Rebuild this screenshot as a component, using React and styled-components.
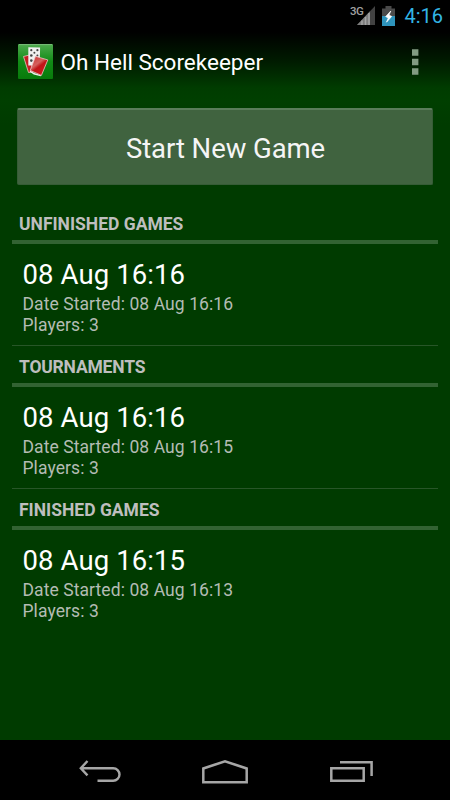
import React from "react";
import styled, { createGlobalStyle } from "styled-components";

const sections = [
  { title: "UNFINISHED GAMES", name: "08 Aug 16:16", started: "08 Aug 16:16", players: 3 },
  { title: "TOURNAMENTS", name: "08 Aug 16:16", started: "08 Aug 16:15", players: 3, tight: true },
  { title: "FINISHED GAMES", name: "08 Aug 16:15", started: "08 Aug 16:13", players: 3 },
];

const SignalIcon = () => (
  <svg width="18" height="19" viewBox="0 0 18 19">
    <path d="M0 19 L18 0 V19 Z" fill="#424242" />
    <path d="M0 19 L13 5.3 V19 Z" fill="#7c7c7c" />
    <path d="M5 14.5v4.5M8.5 11v8M12 7v12" stroke="#a4a4a4" strokeWidth="1.5" />
  </svg>
);

const BatteryIcon = () => (
  <svg width="13" height="20" viewBox="0 0 13 20">
    <path d="M0 2.5h3.5V0h6v2.5H13V20H0z" fill="#4a4a4a" />
    <path d="M0 10h13v10H0z" fill="#2e93bb" />
    <path d="M8.8 5 3.7 10.6l2.6 1.3-1.8 4.3 5.2-5.8-2.7-1.3z" fill="#fff" stroke="#fff" strokeWidth=".7" />
  </svg>
);

const AppIcon = () => (
  <svg width="36" height="36" viewBox="0 0 36 36">
    <defs>
      <linearGradient id="felt" x1="0" y1="0" x2="0" y2="1">
        <stop offset="0" stopColor="#4eaa4e" />
        <stop offset="0.5" stopColor="#118c16" />
        <stop offset="1" stopColor="#087a0b" />
      </linearGradient>
      <linearGradient id="cardBack" x1="0" y1="0" x2="0.7" y2="1">
        <stop offset="0" stopColor="#c8302f" />
        <stop offset="0.45" stopColor="#d4605d" />
        <stop offset="0.6" stopColor="#c01417" />
        <stop offset="1" stopColor="#cc1c1e" />
      </linearGradient>
    </defs>
    <rect x="0" y="0" width="35" height="35" rx="1" fill="url(#felt)" />
    <path d="M1 .6h33" stroke="#79bc79" />
    <path d="M5.5 12.5l6-1.5 4 17-5 .5z" fill="#c31d20" stroke="#e9c4c4" strokeWidth=".8" />
    <path d="M10.3 3.2l11.8.2-.4 18-11.4.2z" fill="#f0f0f0" />
    <g fill="#444">
      <circle cx="13.3" cy="6.2" r="1.1" />
      <circle cx="19.4" cy="6.2" r="1.1" />
      <circle cx="16.4" cy="8.8" r="1" />
      <circle cx="13.3" cy="11.5" r="1.3" />
      <circle cx="19.4" cy="11.5" r="1" />
      <circle cx="13.3" cy="16.6" r="1.3" />
    </g>
    <path d="M12 27l4 2.8 7 1.8" fill="none" stroke="#eee" strokeWidth="1.4" />
    <path d="M17.5 12.3l12.3 3.6-6.4 15.5-11.2-5z" fill="url(#cardBack)" stroke="#efc4c4" strokeWidth=".8" />
  </svg>
);

const OverflowIcon = () => (
  <svg width="7" height="26" viewBox="0 0 7 26">
    <path d="M0 .3h6.4v6.4H0zM0 9.8h6.4v6.4H0zM0 19.3h6.4v6.4H0z" fill="#829b82" />
  </svg>
);

const BackIcon = () => (
  <svg width="42" height="23" viewBox="0 0 42 23">
    <path
      d="M2.5 8.2H34.2a6.3 6.3 0 0 1 0 12.6H18.5M8.5 1 1.8 8.2 8.5 15.4"
      fill="none"
      stroke="#a6a6a6"
      strokeWidth="2.4"
    />
  </svg>
);

const HomeIcon = () => (
  <svg width="48" height="26" viewBox="0 0 48 26">
    <path d="M1.3 23.3V9.5L23 2.2 44.7 9.5v13.8z" fill="none" stroke="#a6a6a6" strokeWidth="2.5" />
  </svg>
);

const RecentsIcon = () => (
  <svg width="43" height="23" viewBox="0 0 43 23">
    <path d="M1.3 8.2h32.4v12.6H1.3z" fill="none" stroke="#a6a6a6" strokeWidth="2.5" />
    <path d="M10 2.2H41.6V16" fill="none" stroke="#a6a6a6" strokeWidth="2.5" />
  </svg>
);

const App = () => {
  return (
    <>
      <GlobalStyle />
      <Screen>
        <StatusBar>
          <Network>3G</Network>
          <SignalIcon />
          <BatteryIcon />
          <Clock>4:16</Clock>
        </StatusBar>
        <ActionBar>
          <AppIcon />
          <Title>Oh Hell Scorekeeper</Title>
          <MenuButton aria-label="More options">
            <OverflowIcon />
          </MenuButton>
        </ActionBar>
        <Content>
          <StartButton type="button">Start New Game</StartButton>
          {sections.map((section) => (
            <Section key={section.title}>
              <SectionTitle $tight={section.tight}>{section.title}</SectionTitle>
              <Game>
                <GameName>{section.name}</GameName>
                <GameInfo>Date Started: {section.started}</GameInfo>
                <GameInfo>Players: {section.players}</GameInfo>
              </Game>
            </Section>
          ))}
        </Content>
        <NavBar>
          <BackIcon />
          <HomeIcon />
          <RecentsIcon />
        </NavBar>
      </Screen>
    </>
  );
};

const GlobalStyle = createGlobalStyle`
  * {
    box-sizing: border-box;
  }
  body {
    margin: 0;
    background: #000;
  }
`;

const Screen = styled.div`
  display: flex;
  flex-direction: column;
  width: 450px;
  height: 800px;
  overflow: hidden;
  font-family: Roboto, sans-serif;
  background: linear-gradient(180deg, #000 0, #000 32px, #001c00 62px, #003c00 88px, #003f00 100px, #003b00 125px);
`;

const StatusBar = styled.div`
  display: flex;
  align-items: flex-start;
  height: 31px;
  padding: 6px 7px 0 0;
  justify-content: flex-end;
  background: #000;

  svg + svg {
    margin-left: 7px;
  }
`;

const Network = styled.span`
  margin-right: -6px;
  font-size: 11.5px;
  line-height: 10px;
  font-weight: 500;
  letter-spacing: -0.5px;
  color: #a0a0a0;
`;

const Clock = styled.span`
  margin-left: 9px;
  font-size: 20px;
  line-height: 20px;
  color: #33b5e5;
`;

const ActionBar = styled.header`
  display: flex;
  align-items: center;
  height: 61px;
  padding: 0 31px 0 18px;
`;

const Title = styled.h1`
  flex: 1;
  margin: 0 0 0 6.5px;
  font-size: 22.5px;
  font-weight: 400;
  color: #fff;
`;

const MenuButton = styled.button`
  display: flex;
  padding: 0;
  border: 0;
  background: transparent;
`;

const Content = styled.main`
  flex: 1;
  padding: 16px 12px 0;
`;

const StartButton = styled.button`
  display: block;
  width: 416px;
  height: 77px;
  margin: 0 0 20px 5px;
  padding: 3px 0 0 1px;
  border: 1px solid #365c36;
  border-top: 2px solid #5a7d5a;
  border-radius: 2px;
  background: #40633f;
  font-family: inherit;
  font-size: 27.5px;
  letter-spacing: -0.07px;
  color: #f5f5f5;
`;

const Section = styled.section`
  height: 143px;

  &:not(:last-child) > div {
    border-bottom: 1px solid #285628;
  }
`;

const SectionTitle = styled.h2`
  height: 39px;
  margin: 0;
  padding: 8px 7px 0;
  border-bottom: 4px solid #326332;
  font-size: 17.5px;
  line-height: 22px;
  font-weight: 700;
  letter-spacing: ${({ $tight }) => ($tight ? "-0.2px" : "0")};
  color: #bebebe;
`;

const Game = styled.div`
  height: 102px;
  padding: 14px 10.5px 0;
`;

const GameName = styled.div`
  margin-bottom: 3px;
  font-size: 27.5px;
  line-height: 33px;
  letter-spacing: 0.1px;
  color: #fff;
`;

const GameInfo = styled.div`
  font-size: 17.5px;
  line-height: 21px;
  letter-spacing: 0.08px;
  color: #b4bcb4;
`;

const NavBar = styled.nav`
  display: flex;
  align-items: center;
  justify-content: space-between;
  height: 60px;
  padding: 3px 77px 0 79px;
  background: #000;
`;

export default App;
